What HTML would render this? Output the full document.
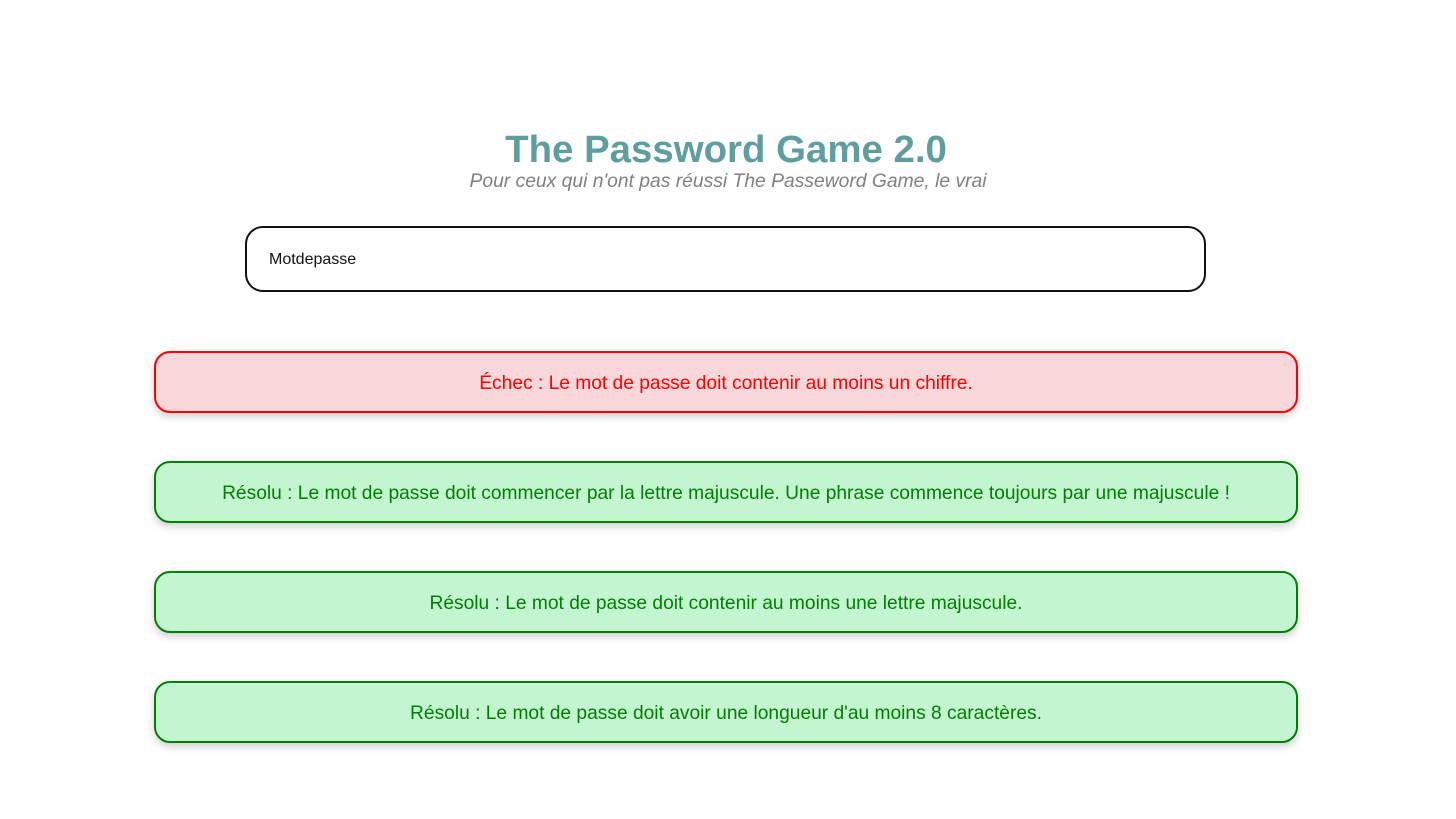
<!DOCTYPE html>
<html><head><meta charset="utf-8"><style>
body{margin:0;background:#fff;font-family:"Liberation Sans",Arial,sans-serif;width:1456px;height:819px;position:relative;overflow:hidden}
h1{position:absolute;top:128px;left:0;width:1452px;text-align:center;margin:0;font-size:38.4px;color:#5f9ea0;font-weight:bold}
.sub{position:absolute;top:171px;left:0;width:1456px;text-align:center;font-style:italic;color:#808080;font-size:19.3px}
.inp{position:absolute;left:245px;top:226px;width:957px;height:62px;border:2px solid #111;border-radius:18px;box-sizing:content-box}
.inp span{position:absolute;left:22px;top:23px;font-size:16px;color:#111}
.r{position:absolute;left:154px;width:1140px;height:58px;border:2px solid;border-radius:16px;text-align:center;line-height:62px;font-size:19.2px;box-shadow:0 4px 8px rgba(0,0,0,0.18)}
.f{background:#f8d7da;border-color:#ff0000;color:#ff0000}
.s{background:#c3f5d0;border-color:#008000;color:#008000}
</style></head><body>
<h1>The Password Game 2.0</h1>
<div class="sub">Pour ceux qui n'ont pas réussi The Passeword Game, le vrai</div>
<div class="inp"><span>Motdepasse</span></div>
<div class="r f" style="top:351px">Échec : Le mot de passe doit contenir au moins un chiffre.</div>
<div class="r s" style="top:461px">Résolu : Le mot de passe doit commencer par la lettre majuscule. Une phrase commence toujours par une majuscule !</div>
<div class="r s" style="top:571px">Résolu : Le mot de passe doit contenir au moins une lettre majuscule.</div>
<div class="r s" style="top:681px">Résolu : Le mot de passe doit avoir une longueur d'au moins 8 caractères.</div>
</body></html>
